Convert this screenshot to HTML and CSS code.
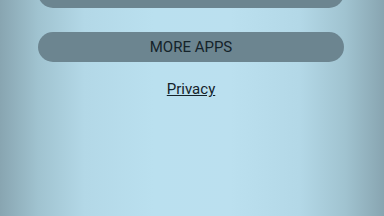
FILE: index.html
```html
<!DOCTYPE html>
<html>
<head>
<meta charset="utf-8">
<link rel="stylesheet" href="styles.css">
</head>
<body>
<div class="page">
  <div class="btn btn-top"></div>
  <div class="btn">MORE APPS</div>
  <a class="privacy" href="#">Privacy</a>
</div>
</body>
</html>
```
FILE: styles.css
```css
html, body {
  margin: 0;
  padding: 0;
  width: 384px;
  height: 216px;
  overflow: hidden;
}
body {
  background: linear-gradient(to right, #88a5b1 0%, #a0c3d0 10%, #b3d8e7 22%, #bae0ef 40%, #bbe0ef 60%, #b3d8e7 78%, #a0c3d0 90%, #88a5b1 100%);
  font-family: Roboto, "Liberation Sans", sans-serif;
}
.page {
  display: flex;
  flex-direction: column;
  align-items: center;
  padding: 0 40px 0 38px;
}
.btn {
  box-sizing: border-box;
  width: 306px;
  height: 30px;
  border-radius: 15px;
  background: #6c8590;
  color: #14232a;
  font-size: 15px;
  display: flex;
  align-items: center;
  justify-content: center;
}
.btn-top {
  margin-top: -22px;
  margin-bottom: 24px;
}
.privacy {
  margin-top: 18px;
  color: #14232a;
  font-size: 15px;
  text-decoration: underline;
}
```
